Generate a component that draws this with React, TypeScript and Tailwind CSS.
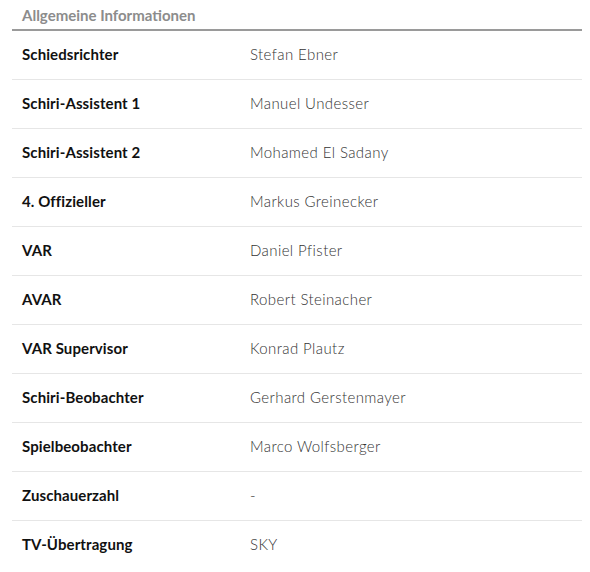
import React from "react";

const rows: [string, string][] = [
  ["Schiedsrichter", "Stefan Ebner"],
  ["Schiri-Assistent 1", "Manuel Undesser"],
  ["Schiri-Assistent 2", "Mohamed El Sadany"],
  ["4. Offizieller", "Markus Greinecker"],
  ["VAR", "Daniel Pfister"],
  ["AVAR", "Robert Steinacher"],
  ["VAR Supervisor", "Konrad Plautz"],
  ["Schiri-Beobachter", "Gerhard Gerstenmayer"],
  ["Spielbeobachter", "Marco Wolfsberger"],
  ["Zuschauerzahl", "-"],
  ["TV-Übertragung", "SKY"],
];

export default function App() {
  return (
    <div className="bg-white w-[590px] h-[572px] pl-3 pr-2 font-['Lato','Open_Sans',sans-serif]">
      <div className="h-[31px] border-b-2 border-[#9a9a9a] pl-[10px] pt-[5px] text-[15px] font-bold text-[#8c8c8c] leading-[20px]">
        Allgemeine Informationen
      </div>
      {rows.map(([k, v], i) => (
        <div
          key={k}
          className={`flex items-center h-[49px] pl-[10px] pb-[2px] ${i < rows.length - 1 ? "border-b border-[#e6e6e6]" : ""}`}
        >
          <div className="w-[228px] text-[15px] font-bold text-[#111] tracking-[0.1px]">{k}</div>
          <div className="text-[15px] font-light text-[#333] tracking-[0.4px]">{v}</div>
        </div>
      ))}
    </div>
  );
}
